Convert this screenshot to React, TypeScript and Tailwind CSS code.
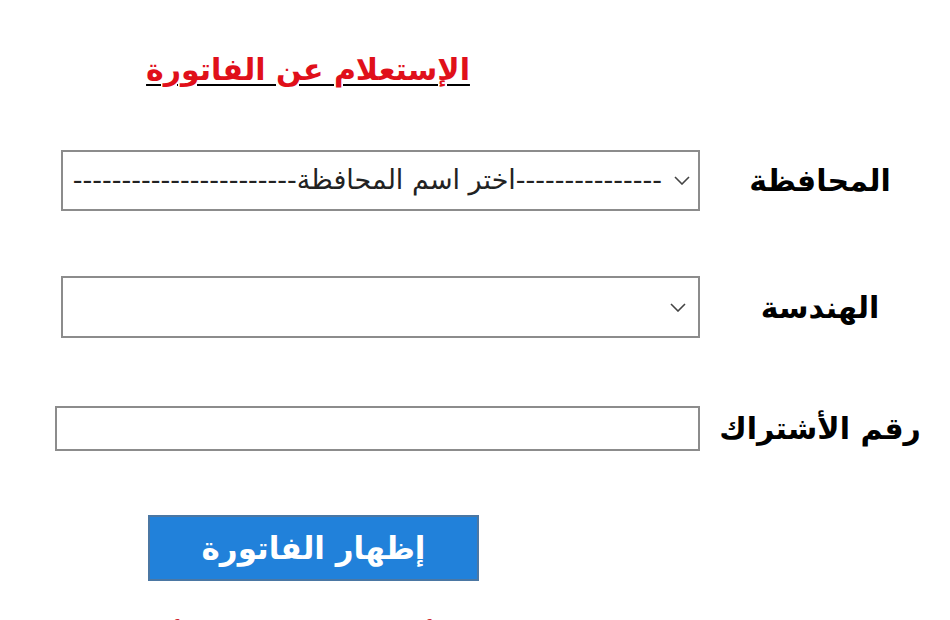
const font = { fontFamily: '"DejaVu Sans", Tahoma, sans-serif' };

function Chevron() {
  return (
    <svg width="16" height="9" viewBox="0 0 16 9" className="shrink-0">
      <path d="M1 1 L8 8 L15 1" fill="none" stroke="#444" strokeWidth="1.6" />
    </svg>
  );
}

function Row({ label, children, className }: { label: string; children: React.ReactNode; className?: string }) {
  return (
    <div className={`flex items-center ${className ?? ''}`}>
      <div className="w-[240px] shrink-0 text-center text-[30px] font-bold text-black">{label}</div>
      {children}
    </div>
  );
}

export default function App() {
  return (
    <div dir="rtl" className="min-h-screen w-[950px] overflow-hidden bg-white pr-[10px]" style={font}>
      <div className="pt-[47px] pr-[465px]">
        <h1 className="w-[334px] text-center text-[30px] font-bold text-[#e0101a] underline decoration-black decoration-2 underline-offset-4">
          الإستعلام عن الفاتورة
        </h1>
      </div>

      <Row label="المحافظة" className="mt-[58px]">
        <div className="flex h-[61px] w-[639px] items-center gap-3 border-2 border-[#8c8c8c] pr-[8px] pl-[6px]">
          <Chevron />
          <span className="flex-1 overflow-hidden text-right text-[27px] whitespace-nowrap text-[#222]">
            ---------------اختر اسم المحافظة-----------------------
          </span>
        </div>
      </Row>

      <Row label="الهندسة" className="mt-[65px]">
        <div className="flex h-[62px] w-[639px] items-center border-2 border-[#8c8c8c] pr-[12px]">
          <Chevron />
        </div>
      </Row>

      <Row label="رقم الأشتراك" className="mt-[68px]">
        <input className="h-[45px] w-[645px] border-2 border-[#8c8c8c] bg-white outline-none" />
      </Row>

      <div className="pr-[461px] pt-[64px]">
        <button className="h-[66px] w-[331px] border-2 border-[#4b77a3] bg-[#2181da] text-[31px] font-bold text-white">
          إظهار الفاتورة
        </button>
      </div>

      <p className="mt-[36px] pr-[20px] text-[26px] font-bold whitespace-nowrap text-[#d0202a]">
        ملحوظة: يمكن الاستعلام عن الفاتورة أو سدادها من خلال أحد منافذ الدفع الإلكتروني المعتمدة
      </p>
    </div>
  );
}
